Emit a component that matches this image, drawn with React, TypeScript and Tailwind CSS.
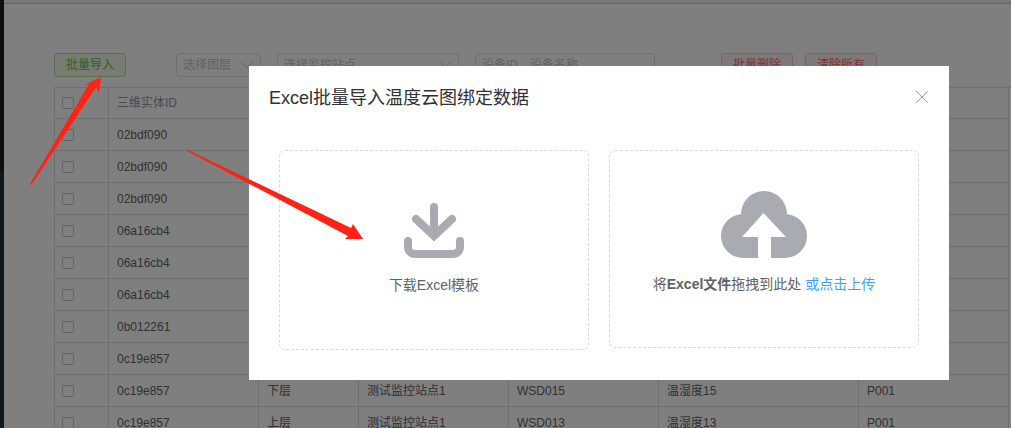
import { ChevronDown, X } from "lucide-react";

// cells behind the dialog are left empty
const rows = [
  ["02bdf090"],
  ["02bdf090"],
  ["02bdf090"],
  ["06a16cb4"],
  ["06a16cb4"],
  ["06a16cb4"],
  ["0b012261"],
  ["0c19e857"],
  ["0c19e857", "下层", "测试监控站点1", "WSD015", "温湿度15", "P001"],
  ["0c19e857", "上层", "测试监控站点1", "WSD013", "温湿度13", "P001"],
];

const cell = "flex items-center border-r border-b border-[#dcdfe6] shrink-0";

function Row({ values, head }: { values: string[]; head?: boolean }) {
  return (
    <div className={`flex ${head ? "h-[31px] text-[#909399]" : "h-[32px] text-[#606266]"}`}>
      <div className={`${cell} w-[55px] border-l pl-[7px]`}>
        <span className="h-[12px] w-[12px] rounded-[2px] border border-[#c0c4cc] bg-white" />
      </div>
      <div className={`${cell} w-[150px] pl-[8px]`}>{values[0]}</div>
      <div className={`${cell} w-[100px] pl-[8px]`}>{values[1]}</div>
      <div className={`${cell} w-[150px] pl-[8px]`}>{values[2]}</div>
      <div className={`${cell} w-[150px] pl-[8px]`}>{values[3]}</div>
      <div className={`${cell} w-[200px] pl-[8px]`}>{values[4]}</div>
      <div className={`${cell} w-[150px] pl-[8px]`}>{values[5]}</div>
    </div>
  );
}

function Page() {
  return (
    <div className="flex h-[428px] w-[1011px] overflow-hidden bg-white text-[12px]">
      <div className="flex w-[4px] shrink-0 flex-col">
        <div className="h-[171px] bg-[#141e28]" />
        <div className="grow bg-[#20303c]" />
      </div>
      <div className="flex min-w-0 grow flex-col">
        <div className="h-[4px] shrink-0 border-b border-[#c8c8c8] bg-[#f0f0f0]" />
        <div className="flex flex-col pl-[50px] pt-[49px]">
          <div className="flex h-[24px] items-stretch">
            <button className="w-[72px] rounded-[3px] border border-[#b3e19d] bg-[#f0f9eb] text-[#67c23a]">批量导入</button>
            <div className="ml-[50px] flex w-[85px] items-center justify-between rounded-[4px] border border-[#dcdfe6] pl-[6px] pr-[3px] text-[#c0c4cc]">
              选择图层
              <ChevronDown className="h-[20px] w-[20px]" strokeWidth={1.2} />
            </div>
            <div className="ml-[16px] flex w-[182px] items-center justify-between rounded-[4px] border border-[#dcdfe6] pl-[6px] pr-[3px] text-[#c0c4cc]">
              选择监控站点
              <ChevronDown className="h-[20px] w-[20px]" strokeWidth={1.2} />
            </div>
            <div className="ml-[16px] flex w-[180px] items-center rounded-[4px] border border-[#dcdfe6] pl-[6px] text-[#c0c4cc]">设备ID、设备名称</div>
            <button className="ml-[66px] w-[72px] rounded-[3px] border border-[#fbc4c4] bg-[#fef0f0] text-[#f56c6c]">批量删除</button>
            <button className="ml-[12px] w-[72px] rounded-[3px] border border-[#fbc4c4] bg-[#fef0f0] text-[#f56c6c]">清除所有</button>
          </div>
          <div className="mt-[10px] border-t border-[#dcdfe6]">
            <Row head values={["三维实体ID"]} />
            {rows.map((r, i) => (
              <Row key={i} values={r} />
            ))}
          </div>
        </div>
      </div>
    </div>
  );
}

function DownloadIcon() {
  return (
    <svg viewBox="0 0 60 55" className="h-[55px] w-[60px]" fill="none" stroke="#a8abb2" strokeWidth="8">
      <path d="M30 4 V30" strokeLinecap="round" />
      <path d="M12 16 L30 33 L48 16" strokeLinecap="round" />
      <path d="M4 38 V44 a7 7 0 0 0 7 7 H49 a7 7 0 0 0 7 -7 V38" strokeLinecap="round" />
    </svg>
  );
}

function CloudIcon() {
  return (
    <svg viewBox="0 0 86 67" className="h-[67px] w-[86px]">
      <circle cx="22" cy="45" r="22" fill="#a8abb2" />
      <circle cx="64" cy="45" r="22" fill="#a8abb2" />
      <circle cx="43" cy="23" r="23" fill="#a8abb2" />
      <rect x="22" y="30" width="42" height="37" fill="#a8abb2" />
      <path d="M42.5 22 L65 46 H50 V67 H37 V46 H21 Z" fill="#fff" />
    </svg>
  );
}

function Modal() {
  return (
    <div className="absolute left-[249px] top-[66px] h-[314px] w-[700px] bg-white">
      <div className="flex h-[84px] items-start justify-between pl-[20px] pr-[16px] pt-[20px]">
        <span className="text-[18px] leading-[24px] text-[#303133]">Excel批量导入温度云图绑定数据</span>
        <X className="h-[22px] w-[22px] text-[#909399]" strokeWidth={1} />
      </div>
      <div className="flex items-start gap-[20px] pl-[30px]">
        <div className="flex h-[200px] w-[310px] flex-col items-center rounded-[6px] border border-dashed border-[#d9d9d9] pt-[52px]">
          <DownloadIcon />
          <span className="mt-[17px] text-[14px] leading-[20px] text-[#606266]">下载Excel模板</span>
        </div>
        <div className="flex h-[198px] w-[310px] flex-col items-center rounded-[6px] border border-dashed border-[#d9d9d9] pt-[40px]">
          <CloudIcon />
          <span className="mt-[16px] text-[14px] leading-[20px] text-[#606266]">
            将<b>Excel文件</b>拖拽到此处 <span className="text-[#409eff]">或点击上传</span>
          </span>
        </div>
      </div>
    </div>
  );
}

function Arrows() {
  return (
    <svg className="pointer-events-none absolute left-0 top-0 h-[428px] w-[1011px]" viewBox="0 0 1011 428">
      <path d="M30 184 L89 84 L84 85 L101 77 L99 93 L96 87 L31.5 185 Z" fill="#ff2316" />
      <path d="M187 149.5 L351 228 L353 224 L363 239 L345 239 L348 236 L187 151 Z" fill="#ff2316" />
    </svg>
  );
}

export default function App() {
  return (
    <div
      className="relative h-[428px] w-[1011px] overflow-hidden"
      style={{ fontFamily: '"Liberation Sans", "Noto Sans CJK SC", sans-serif' }}
    >
      <Page />
      <div className="absolute inset-0 bg-black/50" />
      <Modal />
      <Arrows />
    </div>
  );
}
